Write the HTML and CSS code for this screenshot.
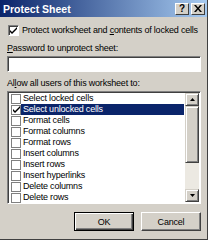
FILE: index.html
```html
<!DOCTYPE html>
<html>
<head>
<meta charset="utf-8">
<link rel="stylesheet" href="styles.css">
</head>
<body>
<div class="dialog">
  <div class="titlebar">
    <span class="title">Protect Sheet</span>
    <div class="tbtns">
      <span class="tbtn help">?</span>
      <span class="tbtn close"><svg width="8" height="7" viewBox="0 0 8 7"><path d="M0 0h2l2 2.5L6 0h2L5 3.5 8 7H6L4 4.5 2 7H0l3-3.5z" fill="#000"/></svg></span>
    </div>
  </div>
  <div class="body">
    <div class="chkrow top">
      <span class="chk sunken"><svg width="7" height="7" viewBox="0 0 7 7"><path d="M0 3l2 2 5-5v2L2 7 0 5z" fill="#000"/></svg></span>
      <span class="lbl">Protect worksheet and <u>c</u>ontents of locked cells</span>
    </div>
    <div class="label pw"><u>P</u>assword to unprotect sheet:</div>
    <div class="input"></div>
    <div class="label allow">Al<u>l</u>ow all users of this worksheet to:</div>
    <div class="list">
      <div class="items">
        <div class="item"><span class="lchk"></span><span class="itxt">Select locked cells</span></div>
        <div class="item sel"><span class="lchk"><svg width="7" height="7" viewBox="0 0 7 7"><path d="M0 3l2 2 5-5v2L2 7 0 5z" fill="#000"/></svg></span><span class="itxt">Select unlocked cells</span></div>
        <div class="item"><span class="lchk"></span><span class="itxt">Format cells</span></div>
        <div class="item"><span class="lchk"></span><span class="itxt">Format columns</span></div>
        <div class="item"><span class="lchk"></span><span class="itxt">Format rows</span></div>
        <div class="item"><span class="lchk"></span><span class="itxt">Insert columns</span></div>
        <div class="item"><span class="lchk"></span><span class="itxt">Insert rows</span></div>
        <div class="item"><span class="lchk"></span><span class="itxt">Insert hyperlinks</span></div>
        <div class="item"><span class="lchk"></span><span class="itxt">Delete columns</span></div>
        <div class="item"><span class="lchk"></span><span class="itxt">Delete rows</span></div>
      </div>
      <div class="scroll">
        <span class="sbtn"><svg width="5" height="3" viewBox="0 0 5 3"><path d="M2.5 0L5 3H0z" fill="#000"/></svg></span>
        <span class="thumb"></span>
        <span class="track"></span>
        <span class="sbtn"><svg width="5" height="3" viewBox="0 0 5 3"><path d="M0 0h5L2.5 3z" fill="#000"/></svg></span>
      </div>
    </div>
    <div class="buttons">
      <span class="btn default">OK</span>
      <span class="btn">Cancel</span>
    </div>
  </div>
</div>
</body>
</html>
```
FILE: styles.css
```css
html, body {
  margin: 0;
  padding: 0;
  background: #d4d0c8;
}
.dialog {
  width: 208px;
  height: 240px;
  box-sizing: border-box;
  background: #d4d0c8;
  border-right: 1px solid #404040;
  border-bottom: 1px solid #404040;
  font-family: "Liberation Sans", Arial, sans-serif;
  font-size: 9px;
  letter-spacing: -0.2px;
  color: #000;
  display: flex;
  flex-direction: column;
  overflow: hidden;
  white-space: nowrap;
}
.titlebar {
  height: 17px;
  background: linear-gradient(to right, #0a246a, #a6caf0);
  display: flex;
  align-items: center;
  justify-content: space-between;
  padding: 0 2px 0 3px;
  flex: none;
}
.title {
  color: #fff;
  font-weight: bold;
  font-size: 10.5px;
  letter-spacing: 0;
}
.tbtns {
  display: flex;
  gap: 2px;
}
.tbtn {
  width: 14px;
  height: 12px;
  box-sizing: border-box;
  background: #d4d0c8;
  border: 1px solid;
  border-color: #fff #404040 #404040 #fff;
  display: flex;
  align-items: center;
  justify-content: center;
  font-weight: bold;
  font-size: 10px;
  line-height: 1;
}
.body {
  flex: 1;
  padding: 7px 6px 0 7px;
  display: flex;
  flex-direction: column;
}
.chkrow {
  display: flex;
  align-items: center;
  gap: 3px;
  height: 12px;
  margin-left: 1px;
  flex: none;
}
.chk {
  width: 11px;
  height: 11px;
  box-sizing: border-box;
  background: #fff;
  border: 1px solid;
  border-color: #808080 #fff #fff #808080;
  box-shadow: inset 1px 1px 0 #404040;
  display: flex;
  align-items: center;
  justify-content: center;
  flex: none;
}
.label {
  height: 12px;
  line-height: 12px;
  flex: none;
}
.pw {
  margin-top: 6px;
}
.input {
  height: 16px;
  box-sizing: border-box;
  margin-top: 2px;
  width: 194px;
  background: #fff;
  border: 1px solid;
  border-color: #808080 #fff #fff #808080;
  box-shadow: inset 1px 1px 0 #404040;
  flex: none;
}
.allow {
  margin-top: 5px;
}
.list {
  margin-top: 2px;
  width: 194px;
  height: 113px;
  box-sizing: border-box;
  background: #fff;
  border: 1px solid;
  border-color: #808080 #fff #fff #808080;
  box-shadow: inset 1px 1px 0 #404040;
  display: flex;
  padding: 1px;
  flex: none;
  overflow: hidden;
}
.items {
  flex: 1;
  min-width: 0;
}
.item {
  height: 11px;
  display: flex;
  align-items: center;
  padding-left: 2px;
}
.lchk {
  width: 10px;
  height: 10px;
  box-sizing: border-box;
  border: 1px solid #808080;
  background: #fff;
  display: flex;
  align-items: center;
  justify-content: center;
  flex: none;
}
.itxt {
  padding-left: 2px;
  height: 11px;
  line-height: 11px;
  flex: 1;
  margin-right: 1px;
}
.sel .itxt {
  background: #0a246a;
  color: #fff;
}
.scroll {
  width: 14px;
  display: flex;
  flex-direction: column;
  background: #ece9e2;
  flex: none;
}
.sbtn, .thumb {
  box-sizing: border-box;
  background: #d4d0c8;
  border: 1px solid;
  border-color: #d4d0c8 #404040 #404040 #d4d0c8;
  box-shadow: inset 1px 1px 0 #fff, inset -1px -1px 0 #808080;
  flex: none;
}
.sbtn {
  height: 13px;
  display: flex;
  align-items: center;
  justify-content: center;
}
.thumb {
  height: 57px;
}
.track {
  flex: 1;
}
.buttons {
  display: flex;
  justify-content: flex-end;
  gap: 7px;
  margin-top: 8px;
  flex: none;
}
.btn {
  width: 60px;
  height: 19px;
  box-sizing: border-box;
  background: #d4d0c8;
  border: 1px solid;
  border-color: #fff #404040 #404040 #fff;
  box-shadow: inset -1px -1px 0 #808080;
  display: flex;
  align-items: center;
  justify-content: center;
}
.btn.default {
  border-color: #000;
  box-shadow: inset 1px 1px 0 #fff, inset -1px -1px 0 #404040, inset -2px -2px 0 #808080;
}
```
